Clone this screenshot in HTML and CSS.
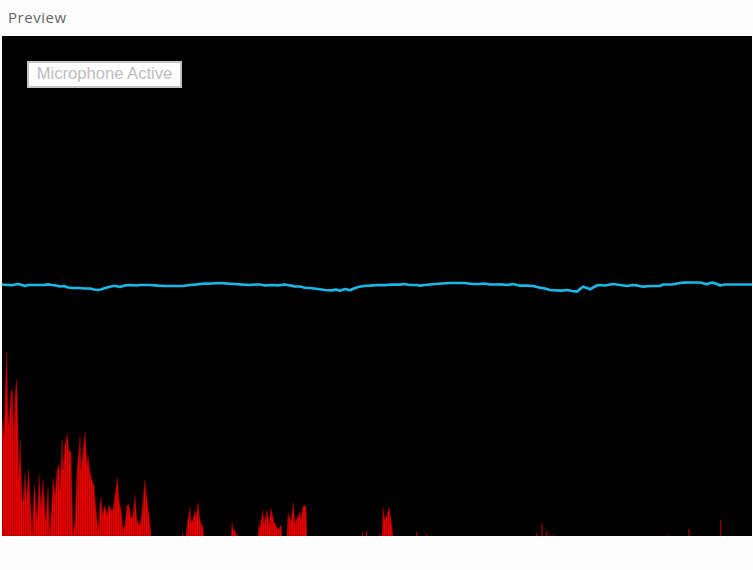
FILE: index.html
```html
<!DOCTYPE html>
<html lang="en">
<head>
    <meta charset="UTF-8">
    <meta name="viewport" content="width=device-width, initial-scale=1.0">
    <title>Preview</title>
    <link rel="stylesheet" href="styles.css">
</head>
<body>
    <header class="preview-title">Preview</header>

    <div class="stage">
        <svg class="scope" viewBox="2 36 750 500" width="750" height="500">
            <defs>
                <pattern id="bars" width="2.2" height="10" patternUnits="userSpaceOnUse">
                    <rect width="2.2" height="10" fill="#ea0000"/>
                    <rect width="0.8" height="10" fill="#a80000"/>
                </pattern>
            </defs>

            <!-- spectrum -->
            <g class="spectrum">
                <polygon points="2,536 2,433 3,420 4,436 5,400 6.7,352 8,412 9,424 11,390 12.5,392 13.5,440 15,395 16.7,379 18,425 18.5,478 20.3,440 22,500 23,502 25,473 26.5,502 28.7,469 30.5,505 32,535 33,510 34.5,485 36,505 37.5,520 39,475 41,505 43,480 45,512 46,520 48,488 50,535 52,500 53,478 55,495 57,470 59,465 60,490 62,440 63,470 65,445 67,434 69,450 71,452 73,535 75,520 77,470 80,436 81,470 83,450 85,432 87,465 88,455 90,472 92,480 94,485 96,510 98,530 100,505 101,497 103,515 105,505 107,515 109,505 111,510 113,510 115,495 117.5,477 119,500 121,510 123,530 125,525 127,505 129,505 131,518 133,515 135,495 137,520 139,525 141,520 143,500 145,480 147,500 149,515 151,535 151,536"/>
                <polygon points="182,536 182.5,532 183,536 186,536 187,524 190,508 191,522 193,520 195,510 196,518 198,503 200,520 203,528 204,536"/>
                <polygon points="231,536 232,522 233,530 235,530 236,536"/>
                <polygon points="258,536 259,525 260,528 262.7,510 264,524 267,510 269,524 271,508 274,522 276,525 278,530 281,525 282,536"/>
                <polygon points="287,536 288,513 291,522 293,503 295,524 297,518 300,512 301,520 303,506 306,506 307,536"/>
                <polygon points="382,536 383,508 385,520 387,515 389,507 391,520 393,536"/>
            </g>
            <path class="spectrum-thin" d="M237 536V533M362.7 536V533M366.7 536V531M380 536V533M416.7 536V532M426.7 536V534M536.7 536V533M542 536V524M546.7 536V531M550 536V535M554 536V535M668 536V535M689 536V529M720.7 536V520"/>

            <!-- waveform -->
            <polyline class="wave" points="2,284.5 8,285 12,285.2 15,284.5 18,284 22,285 25,286 28,285 37,285 44,285 48,284.3 52,285 56,285.5 60,286.5 64,286 68,287.5 74,288 78,288 84,288.5 90,288.5 94,289.5 97,290 101,289.5 105,288 109,287 113,286 116,286 120,287 124,285.7 130,285 136,285.5 140,285 146,285 150,285 158,285.7 165,286 175,286 183,286 190,285 195,284.7 200,284 205,283.7 212,283.5 220,283 228,283.7 235,284 243,284.7 250,285 255,284.5 260,284.5 265,285.5 270,285 278,285.3 285,284.5 291,285.7 295,286.3 300,286.5 306,288 310,288 318,289 325,290 332,290.3 336,289.6 340,290.7 345,289 350,290.3 354,288.5 358,287 364,286 370,285.7 378,285 385,285.2 392,284.5 400,284.7 404,284 410,285 417,285 420,285.7 425,285 430,284.5 435,284 442,283.5 450,283 458,283 465,283 472,284 480,284 484,283.5 490,284.5 495,284.5 500,284.3 507,285 513,284 520,285.7 526,285.7 533,286 540,287.7 545,288.5 550,290 556,290.3 562,290.7 567,290 572,291 577,291.7 580,289 583,286.7 587,288 590,289.3 594,287 598,285 605,285.5 613,284 620,285 627,286 633,285 638,285.7 643,286.7 650,286 655,286 660,286 663,284.5 672,284.5 680,283 683,282.7 692,282.5 700,282.5 704,283.5 707,284.3 710,283 713,282.7 717,284 720,285.5 725,284.5 735,284.5 745,284.5 752,284.5"/>
        </svg>

        <div class="mic-label">Microphone Active</div>
    </div>
</body>
</html>
```

FILE: styles.css
```css
* {
    margin: 0;
    padding: 0;
    box-sizing: border-box;
}

body {
    background: #fcfcfc;
    height: 570px;
    overflow: hidden;
}

.preview-title {
    height: 36px;
    padding: 8px 0 0 8px;
    font-family: "Open Sans", sans-serif;
    font-size: 15px;
    line-height: 18px;
    letter-spacing: 0.55px;
    color: #666;
}

.stage {
    position: relative;
    width: 750px;
    height: 500px;
    margin-left: 2px;
    background: #000;
}

.scope {
    display: block;
}

.spectrum polygon {
    fill: url(#bars);
    stroke: #8c0000;
    stroke-width: 0.5;
}

.spectrum-thin {
    fill: none;
    stroke: #a80000;
    stroke-width: 1.2;
}

.wave {
    fill: none;
    stroke: #1ab8e6;
    stroke-width: 2.7;
    stroke-linejoin: round;
}

.mic-label {
    position: absolute;
    top: 25px;
    left: 25px;
    width: 155px;
    height: 27px;
    border: 2px solid #c4c4c4;
    background: #fff;
    font-family: "Liberation Sans", Arial, sans-serif;
    font-size: 16.6px;
    line-height: 21px;
    text-align: center;
    color: #bdbdbd;
}
```
